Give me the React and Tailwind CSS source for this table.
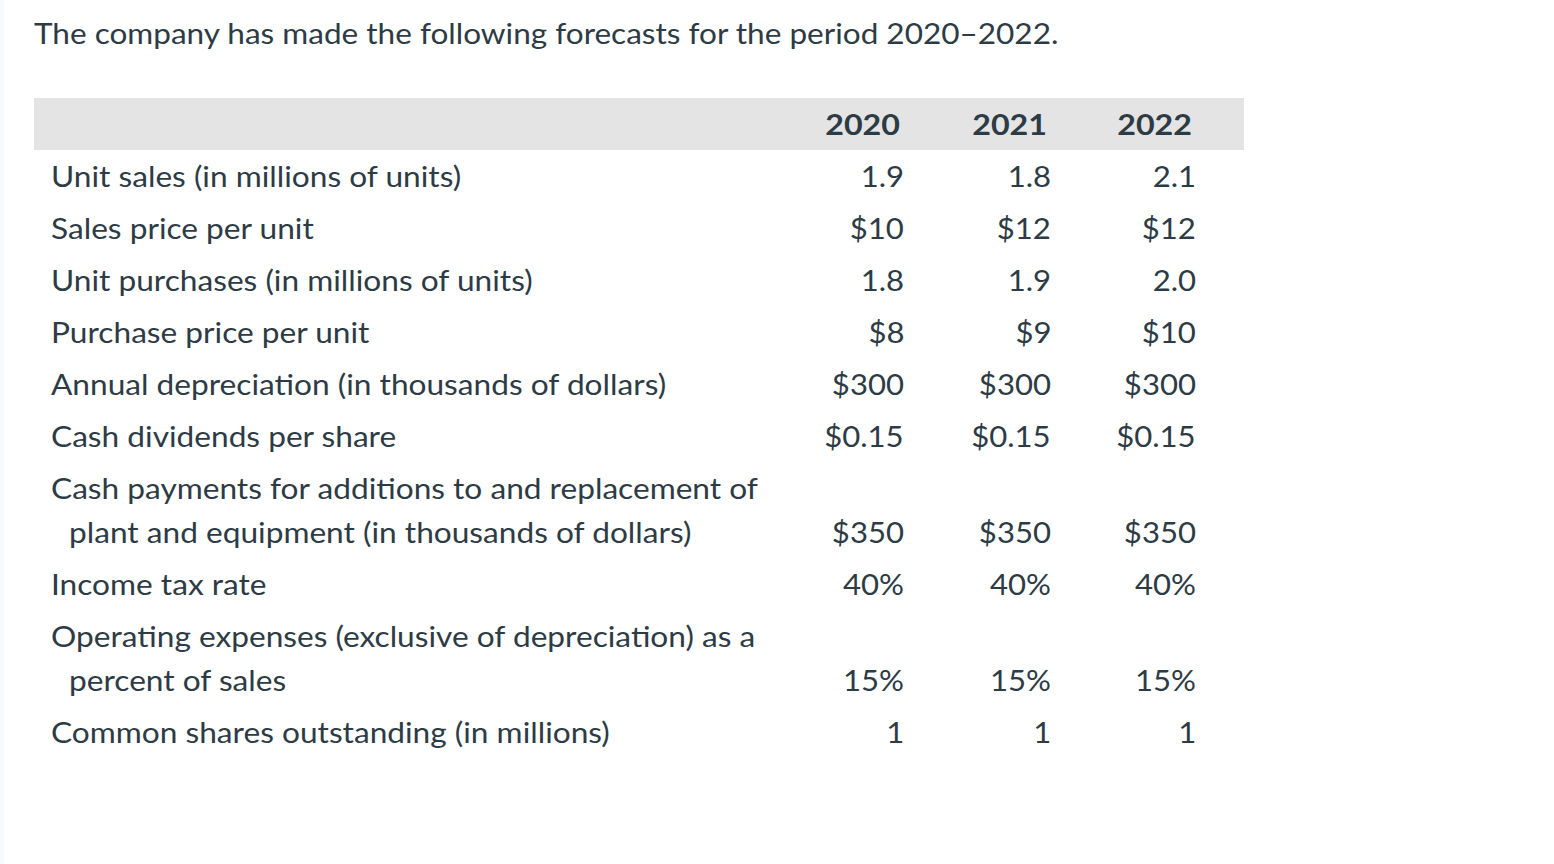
import React from "react";

const rows = [
  { label: ["Unit sales (in millions of units)"], values: ["1.9", "1.8", "2.1"] },
  { label: ["Sales price per unit"], values: ["$10", "$12", "$12"] },
  { label: ["Unit purchases (in millions of units)"], values: ["1.8", "1.9", "2.0"] },
  { label: ["Purchase price per unit"], values: ["$8", "$9", "$10"] },
  { label: ["Annual depreciation (in thousands of dollars)"], values: ["$300", "$300", "$300"] },
  { label: ["Cash dividends per share"], values: ["$0.15", "$0.15", "$0.15"] },
  {
    label: [
      "Cash payments for additions to and replacement of",
      "plant and equipment (in thousands of dollars)",
    ],
    values: ["$350", "$350", "$350"],
  },
  { label: ["Income tax rate"], values: ["40%", "40%", "40%"] },
  {
    label: [
      "Operating expenses (exclusive of depreciation) as a",
      "percent of sales",
    ],
    values: ["15%", "15%", "15%"],
  },
  { label: ["Common shares outstanding (in millions)"], values: ["1", "1", "1"] },
];

const years = ["2020", "2021", "2022"];

export default function App() {
  return (
    <div
      className="min-h-screen w-full bg-white border-l-4 border-[#f8f9fa] text-[#2d3b45]"
      style={{ fontFamily: "Lato, 'Open Sans', sans-serif" }}
    >
      <div className="pl-[30px] pt-[11px]">
        <p className="text-[28px] leading-[44px] whitespace-nowrap">
          <span className="inline-block origin-left scale-x-[1.126]">
            The company has made the following forecasts for the period 2020–2022.
          </span>
        </p>

        <table className="mt-[43px] w-[1210px] border-collapse text-[28px] leading-[44px]">
          <colgroup>
            <col className="w-[769px]" />
            <col className="w-[147px]" />
            <col className="w-[147px]" />
            <col className="w-[147px]" />
          </colgroup>
          <thead>
            <tr className="bg-[#e4e4e4] h-[52px]">
              <th className="p-0" />
              {years.map((y, i) => (
                <th
                  key={y}
                  className={`py-1 text-right font-bold ${
                    i === 2 ? "pr-[52px]" : "pr-[50px]"
                  }`}
                >
                  <span className="inline-block origin-right scale-x-[1.15]">{y}</span>
                </th>
              ))}
            </tr>
          </thead>
          <tbody>
            {rows.map((r) => (
              <tr key={r.label[0]}>
                <td className="py-1 pl-[17px] align-bottom">
                  {r.label.map((line, i) => (
                    <div
                      key={line}
                      className={i > 0 ? "pl-[18px] whitespace-nowrap" : "whitespace-nowrap"}
                    >
                      <span className="inline-block origin-left scale-x-[1.13]">{line}</span>
                    </div>
                  ))}
                </td>
                {r.values.map((v, i) => (
                  <td
                    key={i}
                    className={`py-1 text-right align-bottom ${
                      i === 2 ? "pr-[48px]" : "pr-[46px]"
                    }`}
                  >
                    <span className="inline-block origin-right scale-x-[1.11]">{v}</span>
                  </td>
                ))}
              </tr>
            ))}
          </tbody>
        </table>
      </div>
    </div>
  );
}
